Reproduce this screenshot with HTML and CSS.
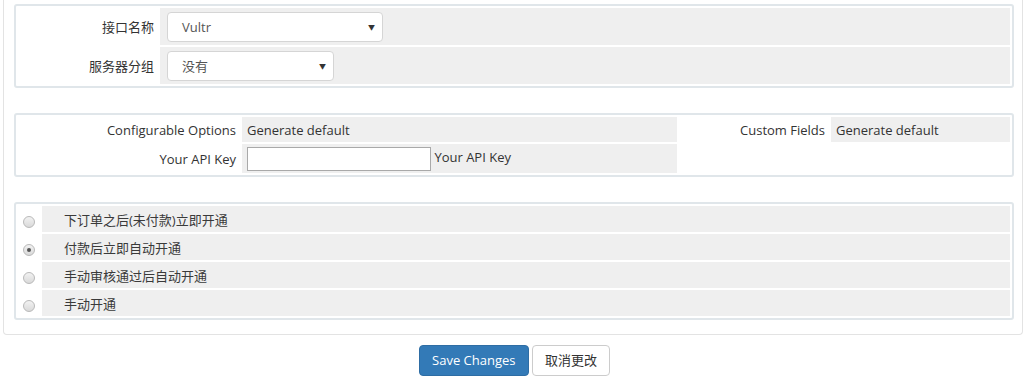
FILE: index.html
```html
<!DOCTYPE html>
<html lang="zh-CN">
<head>
  <meta charset="UTF-8">
  <title>产品模块设置</title>
  <link rel="stylesheet" href="styles.css">
</head>
<body>
  <div class="tab-content">
    <!-- 接口 -->
    <table class="form form-module">
      <tr>
        <td class="fieldlabel">接口名称</td>
        <td class="fieldarea">
          <div class="select select-wide"><span>Vultr</span><span class="caret">▼</span></div>
        </td>
      </tr>
      <tr>
        <td class="fieldlabel">服务器分组</td>
        <td class="fieldarea">
          <div class="select select-narrow"><span>没有</span><span class="caret">▼</span></div>
        </td>
      </tr>
    </table>

    <!-- 模块设置 -->
    <table class="form form-settings">
      <tr class="row-top">
        <td class="fieldlabel col-a">Configurable Options</td>
        <td class="fieldarea col-b">Generate default</td>
        <td class="fieldlabel col-c">Custom Fields</td>
        <td class="fieldarea">Generate default</td>
      </tr>
      <tr class="row-key">
        <td class="fieldlabel">Your API Key</td>
        <td class="fieldarea"><input type="text" class="text-input"> Your API Key</td>
        <td class="fieldlabel"></td>
        <td class="fieldlabel"></td>
      </tr>
    </table>

    <!-- 开通方式 -->
    <table class="form form-setup">
      <tr>
        <td class="radio-cell"><span class="radio"></span></td>
        <td class="fieldarea">下订单之后(未付款)立即开通</td>
      </tr>
      <tr>
        <td class="radio-cell"><span class="radio checked"></span></td>
        <td class="fieldarea">付款后立即自动开通</td>
      </tr>
      <tr>
        <td class="radio-cell"><span class="radio"></span></td>
        <td class="fieldarea">手动审核通过后自动开通</td>
      </tr>
      <tr>
        <td class="radio-cell"><span class="radio"></span></td>
        <td class="fieldarea">手动开通</td>
      </tr>
    </table>
  </div>

  <div class="btn-container">
    <button class="btn btn-primary">Save Changes</button>
    <button class="btn btn-default">取消更改</button>
  </div>
</body>
</html>
```

FILE: styles.css
```css
body {
  margin: 0;
  background-color: #fff;
  font-family: 'Open Sans', 'Noto Sans CJK SC', sans-serif;
  font-size: 13px;
  color: #333;
}

.tab-content {
  margin-left: 3px;
  width: 1000px;
  padding: 4px 8px 14px 10px;
  border: 1px solid #e3e3e3;
  border-top: 0;
  border-radius: 0 0 4px 4px;
}

/* tables */
.form {
  width: 1000px;
  background-color: #fff;
  border: 2px solid #e0e6ea;
  border-radius: 3px;
  border-spacing: 2px;
}

.form td {
  padding: 0 4px;
  vertical-align: middle;
}

.fieldlabel {
  background-color: #fff;
  text-align: right;
  white-space: nowrap;
}

.fieldarea {
  background-color: #efefef;
}

.form-module tr {
  height: 37px;
}

.form-module .fieldlabel {
  width: 132px;
}

.form-module .fieldarea {
  padding-left: 7px;
}

.form-settings,
.form-setup {
  margin-top: 25px;
}

.form-settings .row-top {
  height: 25px;
}

.form-settings .row-key {
  height: 29px;
}

.form-settings .col-a { width: 214px; }
.form-settings .col-b { width: 426px; }
.form-settings .col-c { width: 142px; }

.form-settings .fieldarea {
  padding-left: 5px;
}

.form-setup tr {
  height: 26px;
}

.form-setup .fieldarea {
  padding-left: 22px;
  color: #3a3a3a;
}

.radio-cell {
  width: 14px;
  background-color: #fff;
  text-align: center;
}

/* select boxes */
.select {
  display: flex;
  justify-content: space-between;
  align-items: center;
  box-sizing: border-box;
  height: 30px;
  padding: 0 7px 0 14px;
  background-color: #fff;
  border: 1px solid #d5d5d5;
  border-radius: 4px;
  color: #555;
}

.select-wide { width: 216px; }
.select-narrow { width: 167px; }

.caret {
  font-size: 7px;
  color: #333;
}

.text-input {
  box-sizing: border-box;
  width: 184px;
  height: 24px;
  margin: 0;
  vertical-align: middle;
  border: 1px solid #a9a9a9;
  font-family: inherit;
}

/* radio */
.radio {
  display: inline-block;
  box-sizing: border-box;
  width: 12px;
  height: 12px;
  margin-top: 2px;
  border: 1px solid #b9b9b9;
  border-radius: 50%;
  background: linear-gradient(#f2f2f2, #d9d9d9);
  vertical-align: middle;
  position: relative;
}

.radio.checked::after {
  content: "";
  position: absolute;
  top: 3px;
  left: 3px;
  width: 4px;
  height: 4px;
  border-radius: 50%;
  background-color: #555;
}

/* buttons */
.btn-container {
  margin-top: 10px;
  padding-left: 5px;
  text-align: center;
}

.btn {
  padding: 5px 12px;
  font-family: 'Open Sans', 'Noto Sans CJK SC', sans-serif;
  font-size: 13px;
  line-height: 19px;
  border: 1px solid;
  border-radius: 4px;
  cursor: pointer;
}

.btn-primary {
  background-color: #337ab7;
  border-color: #2e6da4;
  color: #fff;
}

.btn-default {
  background-color: #fff;
  border-color: #ccc;
  color: #333;
}
```
